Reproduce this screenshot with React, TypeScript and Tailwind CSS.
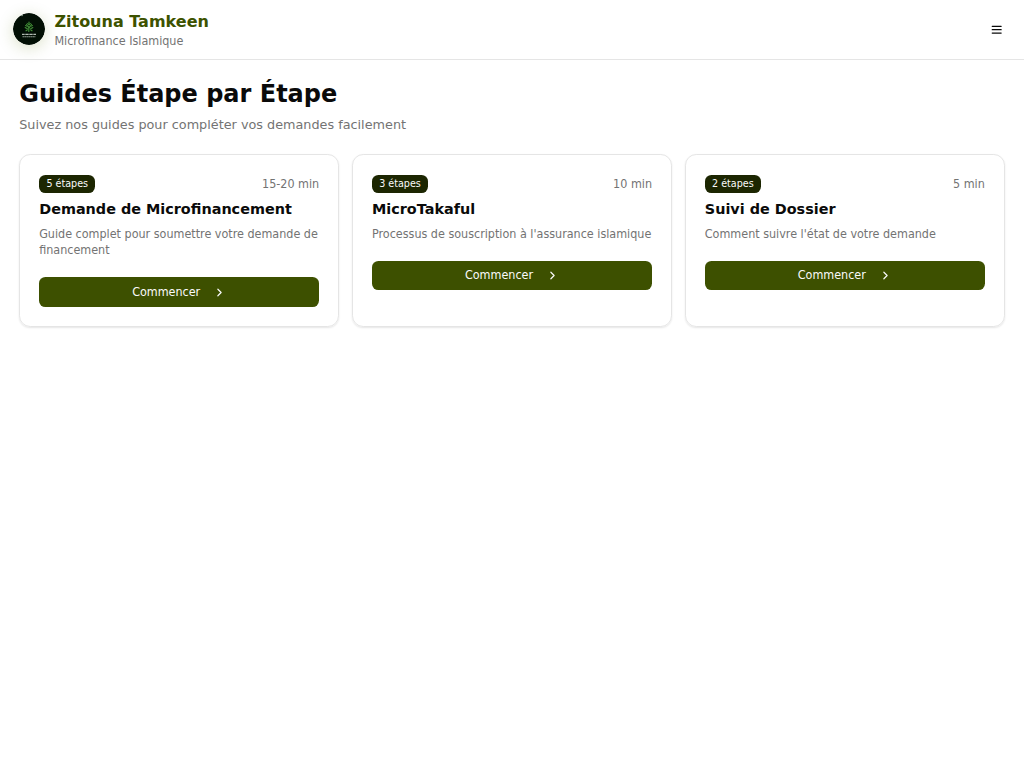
const guides = [
  { steps: "5 étapes", time: "15-20 min", title: "Demande de Microfinancement", text: "Guide complet pour soumettre votre demande de financement" },
  { steps: "3 étapes", time: "10 min", title: "MicroTakaful", text: "Processus de souscription à l'assurance islamique" },
  { steps: "2 étapes", time: "5 min", title: "Suivi de Dossier", text: "Comment suivre l'état de votre demande" },
];

function Logo() {
  return (
    <svg viewBox="0 0 32 32" className="size-8 rounded-full shadow-[0_3px_16px_rgba(90,120,0,0.22)]">
      <circle cx="16" cy="16" r="16" fill="#020f04" />
      <circle cx="9" cy="2.5" r=".7" fill="#b7c9b7" />
      <g fill="none" stroke="#3f8a35" strokeWidth="1.2" strokeLinecap="round">
        <path d="M15.8 18.5v-5M16 15l-2.5-3.5M16 15l2.5-3.5M16 12V9M14.5 16l-2.3-1.5M17.5 16l2.3-1.5M14 17.2l-1 .6M18 17.2l1 .6" />
        <path d="M14.2 10.5l1.5 1M17.8 10.5l-1.5 1M12.4 12.5l1.5 .8M19.5 12.5l-1.5 .8" strokeWidth="1" />
      </g>
      <path d="M9 21.4h14" stroke="#b3bcb3" strokeWidth="1.2" strokeDasharray="2.2 .3 1.2 .3" />
      <path d="M9.5 23.8h13" stroke="#929c92" strokeWidth="1.1" strokeDasharray="1.8 .3" />
    </svg>
  );
}

export default function App() {
  return (
    <div className="min-h-screen bg-white font-['DejaVu_Sans_Condensed','DejaVu_Sans',sans-serif] text-[#0a0a0a]">
      <header className="flex h-[60px] items-center justify-between border-b border-[#e5e5e5] px-[12.8px]">
        <div className="flex items-center gap-[9.6px]">
          <div className="pb-px">
            <Logo />
          </div>
          <div>
            <h1 className="font-['DejaVu_Sans'] text-[16px] leading-[22px] font-bold text-[#3d5200]">Zitouna Tamkeen</h1>
            <p className="text-[12.44px] leading-[16px] text-[#737373]">Microfinance Islamique</p>
          </div>
        </div>
        <button aria-label="Menu" className="flex size-[28.8px] items-center justify-center">
          <svg viewBox="0 0 24 24" className="size-[13.4px]" fill="none" stroke="currentColor" strokeWidth="2.2" strokeLinecap="round">
            <path d="M4 6h16M4 12h16M4 18h16" />
          </svg>
        </button>
      </header>
      <main className="px-[19.2px] pt-[19px]">
        <h2 className="font-['DejaVu_Sans'] text-[24px] leading-[30px] font-bold">Guides Étape par Étape</h2>
        <p className="mt-[6px] font-['DejaVu_Sans'] text-[12.81px] leading-[19px] text-[#737373]">Suivez nos guides pour compléter vos demandes facilement</p>
        <div className="mt-[20px] grid grid-cols-3 gap-[12.8px]">
          {guides.map((g) => (
            <article key={g.title} className="h-[173.4px] rounded-[11.2px] border border-[#e5e5e5] px-[19px] pt-[20px] shadow-[0_1px_2px_rgba(0,0,0,0.1)]">
              <div className="flex h-[18px] items-center justify-between">
                <span className="flex h-[18px] items-center rounded-[6.4px] bg-[#1c2601] px-[7.2px] text-[10.67px] text-[#fafafa]">{g.steps}</span>
                <span className="text-[12.44px] leading-4 text-[#737373]">{g.time}</span>
              </div>
              <h3 className="mt-[6px] font-['DejaVu_Sans'] text-[14.4px] leading-5 font-bold">{g.title}</h3>
              <p className="mt-[7px] text-[12.44px] leading-[16.4px] text-[#737373]">{g.text}</p>
              <button className="mt-[18.6px] flex h-[29.4px] w-full items-center justify-center rounded-[6.4px] bg-[#3d5000] text-[12.44px] text-[#fafafa]">
                Commencer
                <svg viewBox="0 0 24 24" className="ml-[13px] size-[13px]" fill="none" stroke="currentColor" strokeWidth="2.2" strokeLinecap="round" strokeLinejoin="round">
                  <path d="m9 18 6-6-6-6" />
                </svg>
              </button>
            </article>
          ))}
        </div>
      </main>
    </div>
  );
}
